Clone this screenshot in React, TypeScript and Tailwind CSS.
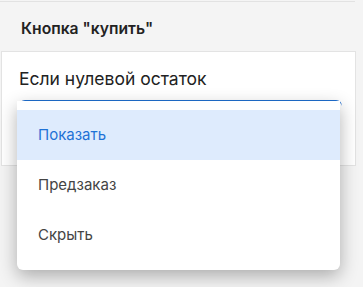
import React from "react";

export default function App() {
  const font = { fontFamily: "Inter, 'Noto Sans', sans-serif" };
  return (
    <div className="w-[363px] h-[287px] bg-[#f4f4f4] overflow-hidden relative" style={font}>
      <div className="h-px w-[355px] bg-[#e2e2e2] mt-[1px]" />
      <div className="h-[49px] flex items-center pl-[21px] pt-[5px]">
        <span className="text-[15.7px] font-semibold text-[#222]">Кнопка "купить"</span>
      </div>
      <div className="ml-[1px] w-[355px] h-[115px] bg-white border border-[#e3e3e3] pt-[14px] pl-[17px]">
        <div className="text-[17.5px] text-[#222] leading-[26px]">Если нулевой остаток</div>
        <div className="mt-[8px] w-[323px] h-[40px] border-t-2 border-[#1f6fd1] rounded-t-[6px]" />
      </div>
      <div className="absolute left-[17px] top-[101px] w-[323px] bg-white rounded-b-[6px] shadow-[0_6px_18px_rgba(0,0,0,0.3)] pt-[9px] pb-[10px]">
        <div className="h-[50px] flex items-center pl-[21px] bg-[#deebfd] text-[#1f72d6] text-[15px]">Показать</div>
        <div className="h-[50px] flex items-center pl-[21px] text-[#444] text-[15px]">Предзаказ</div>
        <div className="h-[50px] flex items-center pl-[21px] text-[#444] text-[15px]">Скрыть</div>
      </div>
    </div>
  );
}
